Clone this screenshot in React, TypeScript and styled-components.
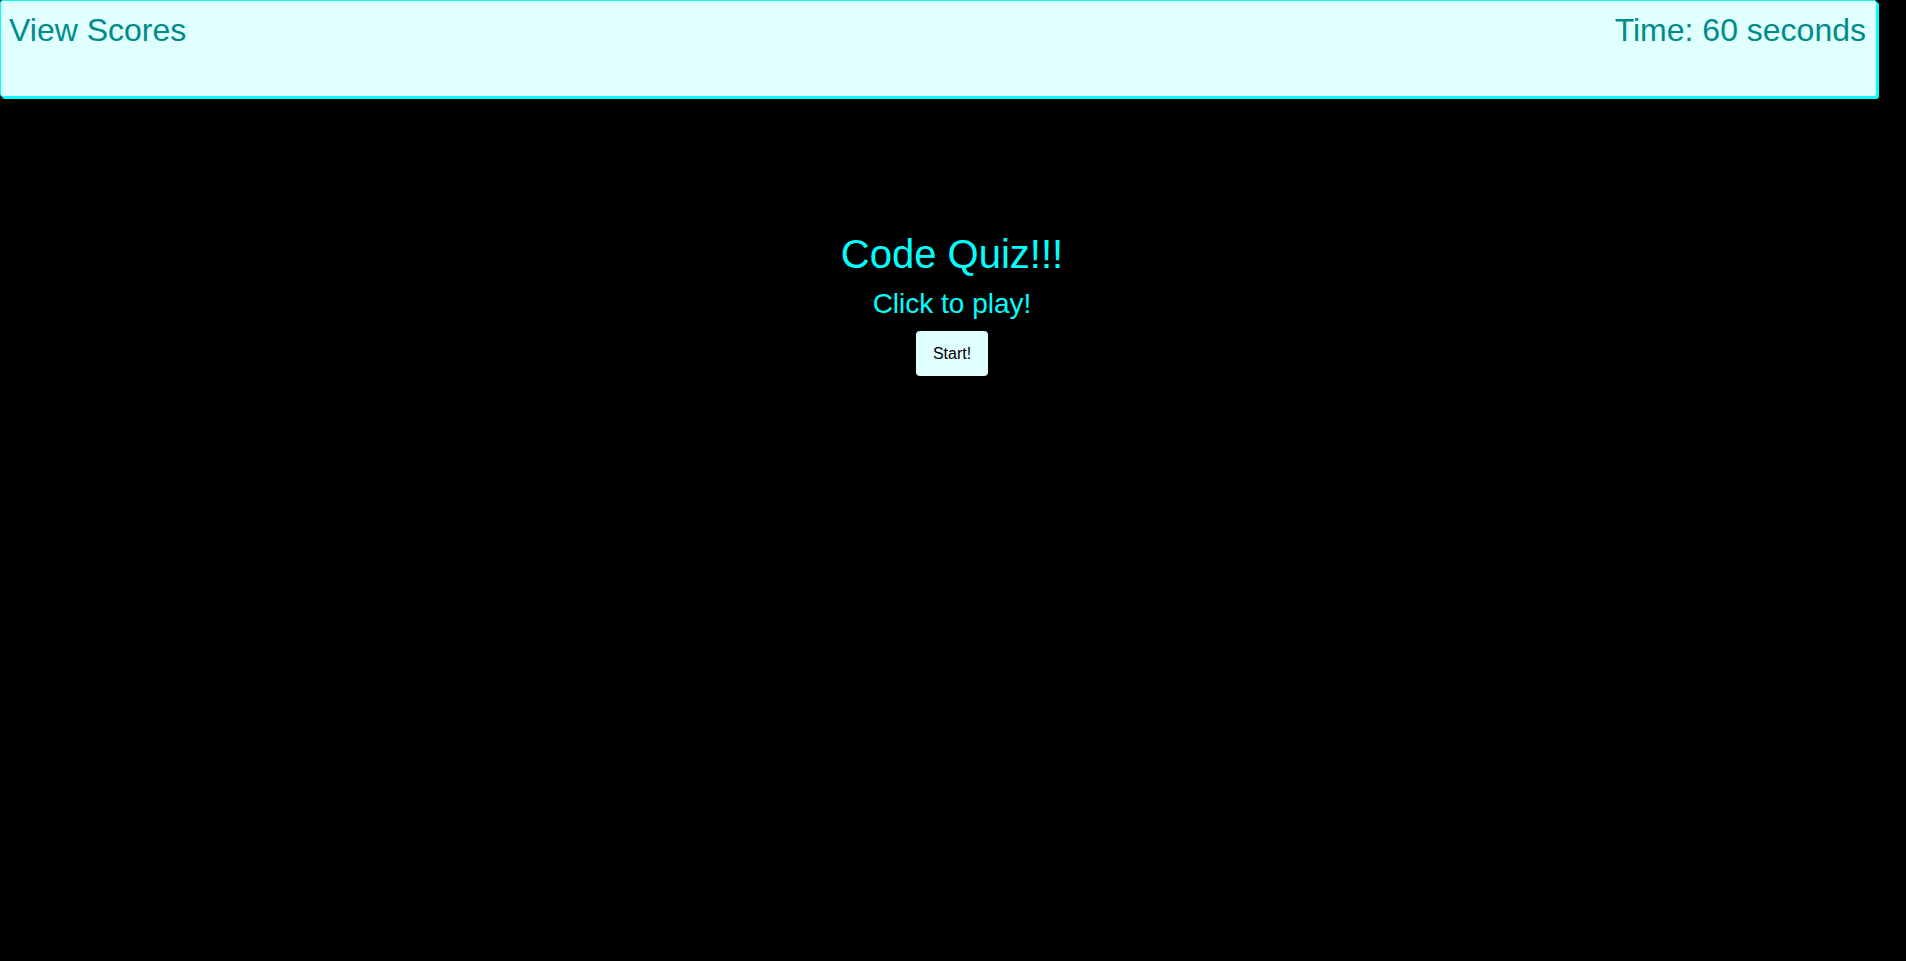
import React from "react";
import styled, { createGlobalStyle } from "styled-components";

const Global = createGlobalStyle`
  html, body {
    margin: 0;
    padding: 0;
    background: #000;
    font-family: "Liberation Sans", Arial, sans-serif;
  }
`;

const Page = styled.div`
  width: 1906px;
  min-height: 961px;
  background: #000;
`;

const Header = styled.header`
  box-sizing: border-box;
  width: 1877px;
  height: 97px;
  display: flex;
  justify-content: space-between;
  align-items: flex-start;
  padding: 11px 10px 0 8px;
  background: #e0ffff;
  border: 1px solid #00ffff;
  border-radius: 3px;
  box-shadow: 2px 2px 0 #00ffff;
`;

const HeaderText = styled.span`
  font-size: 32px;
  line-height: 37px;
  color: #008b8b;
`;

const Main = styled.main`
  display: flex;
  flex-direction: column;
  align-items: center;
  padding-top: 134px;
  padding-right: 2px;
`;

const Title = styled.h1`
  margin: 0;
  font-size: 40px;
  font-weight: normal;
  line-height: 46px;
  color: #00ffff;
`;

const Subtitle = styled.h2`
  margin: 11px 0 0;
  font-size: 28px;
  font-weight: normal;
  line-height: 32px;
  color: #00ffff;
`;

const StartButton = styled.button`
  margin-top: 11px;
  width: 72px;
  height: 45px;
  border: none;
  border-radius: 4px;
  background: #e0ffff;
  color: #000;
  font-family: "Liberation Sans", Arial, sans-serif;
  font-size: 16px;
  cursor: pointer;
`;

export default function App() {
  return (
    <Page>
      <Global />
      <Header>
        <HeaderText>View Scores</HeaderText>
        <HeaderText>Time: 60 seconds</HeaderText>
      </Header>
      <Main>
        <Title>Code Quiz!!!</Title>
        <Subtitle>Click to play!</Subtitle>
        <StartButton>Start!</StartButton>
      </Main>
    </Page>
  );
}
